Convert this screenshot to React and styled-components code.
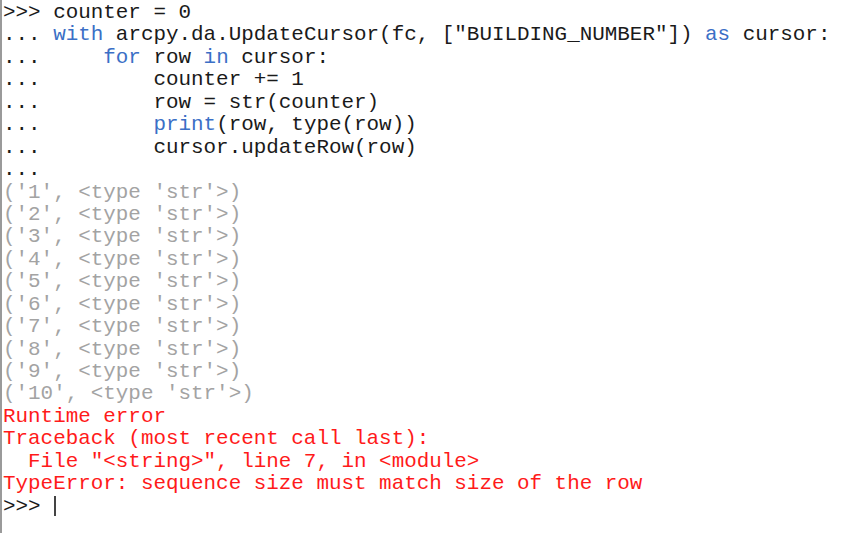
import React from "react";
import styled, { createGlobalStyle } from "styled-components";

const GlobalStyle = createGlobalStyle`
  html, body {
    margin: 0;
    padding: 0;
    background: #ffffff;
  }
`;

const colors = {
  text: "#1a1a1a",
  keyword: "#3b6fc6",
  output: "#a3a3a3",
  error: "#ff1a1a",
};

const Console = styled.div`
  box-sizing: border-box;
  width: 865px;
  height: 533px;
  border-left: 2px solid #9a9a9a;
  padding: 2px 0 0 1px;
  font-family: "Courier New", "Liberation Mono", monospace;
  font-size: 20.9px;
  line-height: 22.45px;
  color: ${colors.text};
  overflow: hidden;
`;

const Line = styled.div`
  white-space: pre;
  height: 22.45px;
  color: ${(p) => colors[p.$kind] || colors.text};
`;

const Kw = styled.span`
  color: ${colors.keyword};
`;

const Caret = styled.span`
  display: inline-block;
  width: 2px;
  height: 20px;
  margin-left: 1px;
  vertical-align: -4px;
  background: #444;
`;

const outputs = ["1", "2", "3", "4", "5", "6", "7", "8", "9", "10"];

export default function App() {
  return (
    <>
      <GlobalStyle />
      <Console>
        <Line>{">>> counter = 0"}</Line>
        <Line>
          {"... "}
          <Kw>with</Kw>
          {' arcpy.da.UpdateCursor(fc, ["BUILDING_NUMBER"]) '}
          <Kw>as</Kw>
          {" cursor:"}
        </Line>
        <Line>
          {"...     "}
          <Kw>for</Kw>
          {" row "}
          <Kw>in</Kw>
          {" cursor:"}
        </Line>
        <Line>{"...         counter += 1"}</Line>
        <Line>{"...         row = str(counter)"}</Line>
        <Line>
          {"...         "}
          <Kw>print</Kw>
          {"(row, type(row))"}
        </Line>
        <Line>{"...         cursor.updateRow(row)"}</Line>
        <Line>{"..."}</Line>
        {outputs.map((n) => (
          <Line key={n} $kind="output">{`('${n}', <type 'str'>)`}</Line>
        ))}
        <Line $kind="error">Runtime error</Line>
        <Line $kind="error">Traceback (most recent call last):</Line>
        <Line $kind="error">{'  File "<string>", line 7, in <module>'}</Line>
        <Line $kind="error">TypeError: sequence size must match size of the row</Line>
        <Line>
          {">>> "}
          <Caret />
        </Line>
      </Console>
    </>
  );
}
